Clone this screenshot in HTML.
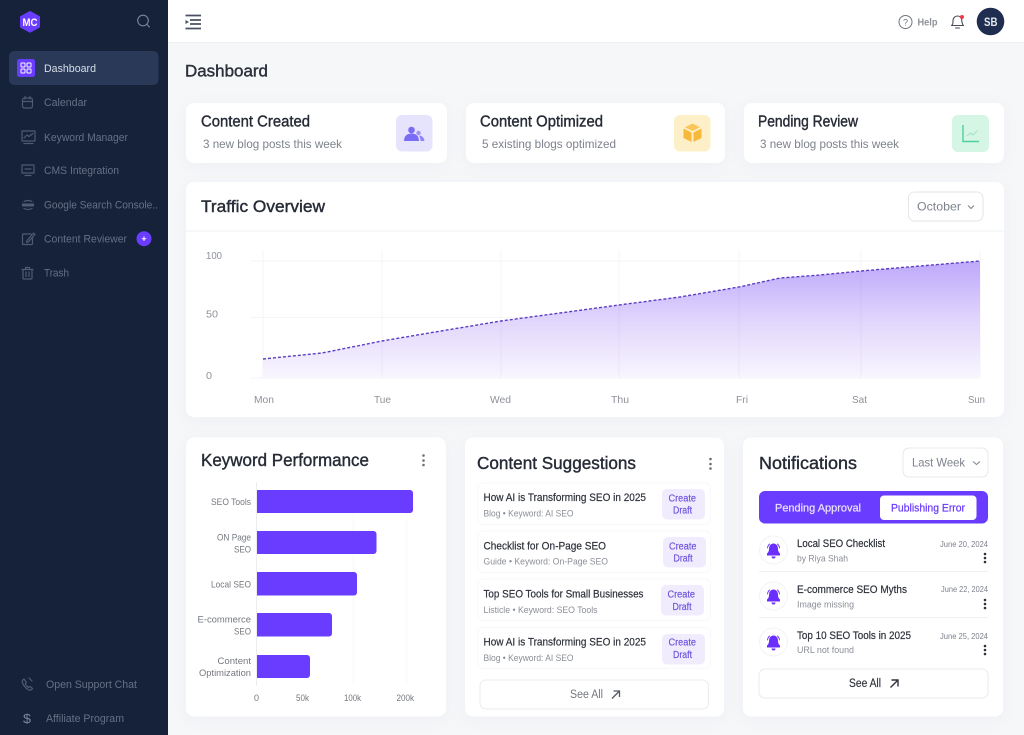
<!DOCTYPE html>
<html lang="en"><head><meta charset="utf-8"><title>Dashboard</title>
<style>
html,body{margin:0;padding:0;width:1024px;height:735px;overflow:hidden;background:#f6f7f9}
svg{display:block;filter:blur(.35px)}
text{font-family:"Liberation Sans",sans-serif;white-space:pre}
.n{font-size:11px;fill:#667085}
.h{font-size:15.500px;fill:#262b36;stroke:#262b36;stroke-width:.4}
.s{font-size:12px;fill:#7d828c}
.l{font-size:10.500px;fill:#8d9199}
.k{font-size:9.500px;fill:#74787f}
.r{font-size:11px;fill:#2d313a;stroke:#2d313a;stroke-width:.2}
.m{font-size:9.500px;fill:#8a8e96}
.c{font-size:10px;fill:#6c50dc;stroke:#6c50dc;stroke-width:.15}
.t{font-size:17.500px;fill:#262b36;stroke:#262b36;stroke-width:.4}
.card{fill:#fff;filter:drop-shadow(0 3px 8px rgba(30,35,60,.035))}
.ni{fill:none;stroke:#4f5b72;stroke-width:1.200;stroke-linecap:round;stroke-linejoin:round}
</style></head>
<body>
<svg width="1024" height="735" viewBox="0 0 1024 735" xmlns="http://www.w3.org/2000/svg">
<defs>
<linearGradient id="g" x1="0" y1="261" x2="0" y2="378" gradientUnits="userSpaceOnUse">
<stop offset="0" stop-color="#bda8fb"/><stop offset=".5" stop-color="#e0d5fc"/><stop offset="1" stop-color="#f9f6fe"/>
</linearGradient>
</defs>
<rect width="1024" height="735" fill="#f6f7f9"/>

<!-- sidebar -->
<rect width="168" height="735" fill="#16213a"/>
<path d="M30 11.500l9.500 5.200v10.300l-9.500 5.200-9.500-5.200V16.700z" fill="#6a3cff" stroke="#6a3cff" stroke-linejoin="round"/>
<text x="22.500" y="25.800" font-size="11" font-weight="700" fill="#fff" textLength="15" lengthAdjust="spacingAndGlyphs">MC</text>
<circle cx="143" cy="20.500" r="5.300" fill="none" stroke="#7b8699" stroke-width="1.100"/><path d="M147 24.500l2.500 2.500" stroke="#7b8699" stroke-width="1.100" stroke-linecap="round"/>

<rect x="9" y="51" width="149.500" height="34" rx="5" fill="#2a3958"/>
<rect x="17" y="59" width="18" height="18" rx="2.500" fill="#6a3cff"/>
<g fill="none" stroke="#fff" stroke-width="1"><rect x="21" y="63" width="4" height="4" rx=".6"/><rect x="27" y="63" width="4" height="4" rx=".6"/><rect x="21" y="69" width="4" height="4" rx=".6"/><rect x="27" y="69" width="4" height="4" rx=".6"/></g>
<text x="44" y="71.800" class="n" style="fill:#d8deea" textLength="52" lengthAdjust="spacingAndGlyphs">Dashboard</text>

<rect x="22.500" y="98" width="10" height="10" rx="2" class="ni"/><path d="M22.500 101.500h10M25 96.500v2.500M30 96.500v2.500" class="ni"/>
<text x="44" y="105.800" class="n" textLength="43" lengthAdjust="spacingAndGlyphs">Calendar</text>

<rect x="22" y="131" width="13" height="10" class="ni"/><path d="M24 138l3-3 2 1.500 4-3M24 143.500h9" class="ni"/>
<text x="44" y="141" class="n" textLength="84" lengthAdjust="spacingAndGlyphs">Keyword Manager</text>

<rect x="22" y="165" width="12" height="8" class="ni"/><path d="M25 169h6M25 175.500h6" class="ni"/>
<text x="44" y="174" class="n" textLength="75" lengthAdjust="spacingAndGlyphs">CMS Integration</text>

<path d="M22 205h12" stroke="#4f5b72" stroke-width="3"/><path d="M24 201.500q4-2 8 0M24 208.500q4 2 8 0" class="ni"/>
<text x="44" y="208.700" class="n" textLength="114" lengthAdjust="spacingAndGlyphs">Google Search Console..</text>

<path d="M31 234h-7.500a1 1 0 0 0-1 1v8.500a1 1 0 0 0 1 1h8a1 1 0 0 0 1-1V237M27 240.500l6.500-7.500 1.500 1.300-6.500 7.500-2 .5z" class="ni"/>
<text x="44" y="242.700" class="n" textLength="83" lengthAdjust="spacingAndGlyphs">Content Reviewer</text>
<circle cx="144" cy="238.700" r="7.500" fill="#6a3cff"/><path d="M141.800 238.700h4.400M144 236.500v4.400" stroke="#fff" stroke-width="1"/>

<path d="M23 269.500h9v8.500a1 1 0 0 1-1 1h-7a1 1 0 0 1-1-1zM22 269.500h11M25.500 269v-1.500h4v1.500M26 272v4.500M29 272v4.500" class="ni"/>
<text x="44" y="276.700" class="n" textLength="25" lengthAdjust="spacingAndGlyphs">Trash</text>

<path d="M24 679c-2 1-2 3-1 5 1.500 3 3.500 5 6 6 1.500.5 3-.5 3.500-1.500l-2.500-2-1.500 1c-1.500-.8-2.500-2-3.200-3.500l1-1.500z" class="ni"/><path d="M29 678l3 3" class="ni"/>
<text x="46" y="687.800" class="n" textLength="91" lengthAdjust="spacingAndGlyphs">Open Support Chat</text>
<text x="23" y="723" font-size="13" fill="#7d889b" textLength="8" lengthAdjust="spacingAndGlyphs">$</text>
<text x="46" y="721.800" class="n" textLength="78" lengthAdjust="spacingAndGlyphs">Affiliate Program</text>

<!-- header -->
<rect x="168" width="856" height="42.500" fill="#fff"/><path d="M168 42.500h856" stroke="#eeeff1"/>
<path d="M185.500 15.500h15.500M190 20h11M190 24h11M185.500 28.500h15.500" stroke="#4b5161" stroke-width="1.800"/><path d="M185.500 20l3.500 2-3.500 2z" fill="#4b5161"/>
<circle cx="905.500" cy="22" r="6.500" fill="none" stroke="#70757f" stroke-width="1"/>
<text x="903" y="25.500" font-size="9" fill="#70757f">?</text>
<text x="917.500" y="25.500" font-size="10" font-weight="700" fill="#8d9199" textLength="20" lengthAdjust="spacingAndGlyphs">Help</text>
<path d="M951.500 25.500c1.500-1 1.500-2.500 1.500-5 0-2.500 2-4.500 4.500-4.500 2 0 3.500 1 4 3 .5 2 .3 5 2 6.500zM955.500 28h4" fill="none" stroke="#474c58" stroke-width="1.100" stroke-linecap="round" stroke-linejoin="round"/>
<circle cx="962" cy="17" r="2" fill="#ef3a4a"/>
<circle cx="990.500" cy="21.500" r="13.800" fill="#1f2e50"/>
<text x="984" y="25.800" font-size="11.500" font-weight="700" fill="#e5e9f1" textLength="13.500" lengthAdjust="spacingAndGlyphs">SB</text>

<text x="185" y="76.700" font-size="16.500" fill="#2b303b" stroke="#2b303b" stroke-width=".4" textLength="83" lengthAdjust="spacingAndGlyphs">Dashboard</text>

<!-- stat cards -->
<rect x="186" y="103" width="261" height="60" rx="8" class="card"/>
<rect x="466" y="103" width="259" height="60" rx="8" class="card"/>
<rect x="744" y="103" width="260" height="60" rx="8" class="card"/>
<text x="201" y="126.300" class="h" textLength="109" lengthAdjust="spacingAndGlyphs">Content Created</text>
<text x="203" y="148" class="s" textLength="139" lengthAdjust="spacingAndGlyphs">3 new blog posts this week</text>
<text x="480" y="126.300" class="h" textLength="123" lengthAdjust="spacingAndGlyphs">Content Optimized</text>
<text x="482" y="148" class="s" textLength="134" lengthAdjust="spacingAndGlyphs">5 existing blogs optimized</text>
<text x="758" y="126.300" class="h" textLength="100" lengthAdjust="spacingAndGlyphs">Pending Review</text>
<text x="760" y="148" class="s" textLength="139" lengthAdjust="spacingAndGlyphs">3 new blog posts this week</text>

<rect x="396" y="115" width="36.500" height="36.500" rx="6" fill="#e6e3fd"/>
<g fill="#7a6cf5"><circle cx="411.500" cy="130" r="3.300"/><path d="M404 141c0-5 3-7.500 7.500-7.500s7.500 2.500 7.500 7.500z"/><circle cx="418.500" cy="133" r="2.200" fill="#9c92f7"/><path d="M419 135.500c3 0 5 2 5.500 5.500h-4c0-2-.5-4-1.500-5.500z" fill="#8f84f6"/></g>

<rect x="674" y="115" width="36.500" height="36.500" rx="6" fill="#fdf0c8"/>
<path d="M692.500 123.500l7.500 3.700-7.500 3.800-7.500-3.800z" fill="#fbc55a"/><path d="M683.500 128.500l8 4v9.500l-8-4zM701.500 128.500l-8 4v9.500l8-4z" fill="#f8b93a"/>

<rect x="952" y="115" width="37" height="37" rx="6" fill="#d5f5e5"/>
<path d="M963 125v16.500h16" fill="none" stroke="#4fcf9c" stroke-width="1.400"/><path d="M967 136l3.500-3 2.500 2 4.500-4.500" fill="none" stroke="#a3e3c8" stroke-width="1.100"/>

<!-- traffic -->
<rect x="186" y="182" width="818" height="235" rx="8" class="card"/>
<text x="201" y="212" font-size="17" fill="#262b36" stroke="#262b36" stroke-width=".4" textLength="124" lengthAdjust="spacingAndGlyphs">Traffic Overview</text>
<path d="M186 231h818" stroke="#eff0f3"/>
<rect x="908.500" y="192" width="74.500" height="29" rx="6" fill="#fff" stroke="#e5e6ea"/>
<text x="917" y="210.500" font-size="12" fill="#7d828c" textLength="44" lengthAdjust="spacingAndGlyphs">October</text>
<path d="M968 205.500l3 3 3-3" fill="none" stroke="#7d828c" stroke-width="1"/>

<g stroke="#f5f5f8" stroke-width="1"><path d="M250 261h730M250 317.500h730M250 378h730M263 250v128M382 250v128M501 250v128M619 250v128M739 250v128M861 250v128M980 250v128"/></g>
<polygon points="263,359 322,353 352,347 382,341 441,331 501,321 560,313 619,305 680,297 739,287 780,278 820,275 861,271 920,266 980,261 980,378 263,378" fill="url(#g)"/>
<g stroke="#7a60d8" stroke-width="1" opacity=".07"><path d="M382 341v37M501 321v57M619 305v73M739 288v90M861 272v106"/></g>
<polyline points="263,359 322,353 352,347 382,341 441,331 501,321 560,313 619,305 680,297 739,287 780,278 820,275 861,271 920,266 980,261" fill="none" stroke="#5b3dc4" stroke-width="1.400" stroke-dasharray="3 2"/>
<text x="206" y="259" class="l" textLength="16" lengthAdjust="spacingAndGlyphs">100</text>
<text x="206" y="317.500" class="l" textLength="12" lengthAdjust="spacingAndGlyphs">50</text>
<text x="206" y="379" class="l" textLength="6" lengthAdjust="spacingAndGlyphs">0</text>
<text x="254" y="403" class="l" textLength="20" lengthAdjust="spacingAndGlyphs">Mon</text>
<text x="374" y="403" class="l" textLength="17" lengthAdjust="spacingAndGlyphs">Tue</text>
<text x="490" y="403" class="l" textLength="21" lengthAdjust="spacingAndGlyphs">Wed</text>
<text x="611" y="403" class="l" textLength="18" lengthAdjust="spacingAndGlyphs">Thu</text>
<text x="736" y="403" class="l" textLength="12" lengthAdjust="spacingAndGlyphs">Fri</text>
<text x="852" y="403" class="l" textLength="15" lengthAdjust="spacingAndGlyphs">Sat</text>
<text x="968" y="403" class="l" textLength="17" lengthAdjust="spacingAndGlyphs">Sun</text>

<!-- keyword performance -->
<rect x="186" y="437.500" width="260" height="279" rx="8" class="card"/>
<text x="201" y="466" class="t" textLength="168" lengthAdjust="spacingAndGlyphs">Keyword Performance</text>
<g fill="#6b7078"><circle cx="423.500" cy="455.500" r="1.300"/><circle cx="423.500" cy="460.500" r="1.300"/><circle cx="423.500" cy="465" r="1.300"/></g>
<path d="M256.500 482v204" stroke="#ececf0"/><path d="M353 490v195M407 490v195" stroke="#f9f9fb"/>
<g fill="#6a3cff">
<path d="M257 490h153a3 3 0 0 1 3 3v17a3 3 0 0 1-3 3H257z"/>
<path d="M257 531h116.500a3 3 0 0 1 3 3v17a3 3 0 0 1-3 3H257z"/>
<path d="M257 572h97a3 3 0 0 1 3 3v17.500a3 3 0 0 1-3 3H257z"/>
<path d="M257 613h72a3 3 0 0 1 3 3v17.500a3 3 0 0 1-3 3H257z"/>
<path d="M257 655h50a3 3 0 0 1 3 3v17a3 3 0 0 1-3 3H257z"/>
</g>
<text x="211" y="505" class="k" textLength="40" lengthAdjust="spacingAndGlyphs">SEO Tools</text>
<text x="217" y="540.300" class="k" textLength="34" lengthAdjust="spacingAndGlyphs">ON Page</text>
<text x="234" y="552.500" class="k" textLength="17" lengthAdjust="spacingAndGlyphs">SEO</text>
<text x="211" y="587.300" class="k" textLength="40" lengthAdjust="spacingAndGlyphs">Local SEO</text>
<text x="197.500" y="622.500" class="k" textLength="53.500" lengthAdjust="spacingAndGlyphs">E-commerce</text>
<text x="234" y="634.500" class="k" textLength="17" lengthAdjust="spacingAndGlyphs">SEO</text>
<text x="217.500" y="664" class="k" textLength="33.500" lengthAdjust="spacingAndGlyphs">Content</text>
<text x="199" y="676" class="k" textLength="52" lengthAdjust="spacingAndGlyphs">Optimization</text>
<text x="254" y="701" class="k" textLength="5" lengthAdjust="spacingAndGlyphs">0</text>
<text x="296" y="701" class="k" textLength="13" lengthAdjust="spacingAndGlyphs">50k</text>
<text x="344" y="701" class="k" textLength="17" lengthAdjust="spacingAndGlyphs">100k</text>
<text x="396.500" y="701" class="k" textLength="17.500" lengthAdjust="spacingAndGlyphs">200k</text>

<!-- content suggestions -->
<rect x="465" y="437.500" width="259" height="279" rx="8" class="card"/>
<text x="477" y="469" class="t" textLength="159" lengthAdjust="spacingAndGlyphs">Content Suggestions</text>
<g fill="#6b7078"><circle cx="710.500" cy="459" r="1.300"/><circle cx="710.500" cy="464" r="1.300"/><circle cx="710.500" cy="468.500" r="1.300"/></g>
<g fill="#fff" stroke="#f8f8fa"><rect x="477.500" y="483" width="233" height="41.500" rx="5"/><rect x="477.500" y="531" width="233" height="41.500" rx="5"/><rect x="477.500" y="579" width="233" height="41.500" rx="5"/><rect x="477.500" y="627.500" width="233" height="41" rx="5"/></g>
<text x="483.500" y="501" class="r" textLength="162.500" lengthAdjust="spacingAndGlyphs">How AI is Transforming SEO in 2025</text>
<text x="483.500" y="516.500" class="m" textLength="90" lengthAdjust="spacingAndGlyphs">Blog • Keyword: AI SEO</text>
<text x="483.500" y="549.500" class="r" textLength="122.500" lengthAdjust="spacingAndGlyphs">Checklist for On-Page SEO</text>
<text x="483.500" y="564.500" class="m" textLength="124.500" lengthAdjust="spacingAndGlyphs">Guide • Keyword: On-Page SEO</text>
<text x="483.500" y="597.500" class="r" textLength="160" lengthAdjust="spacingAndGlyphs">Top SEO Tools for Small Businesses</text>
<text x="483.500" y="612.800" class="m" textLength="114" lengthAdjust="spacingAndGlyphs">Listicle • Keyword: SEO Tools</text>
<text x="483.500" y="645.500" class="r" textLength="162.500" lengthAdjust="spacingAndGlyphs">How AI is Transforming SEO in 2025</text>
<text x="483.500" y="661" class="m" textLength="90" lengthAdjust="spacingAndGlyphs">Blog • Keyword: AI SEO</text>
<g fill="#f0ecfd"><rect x="662" y="489" width="43" height="30.500" rx="5"/><rect x="663" y="537" width="43" height="30.500" rx="5"/><rect x="661" y="585" width="43" height="30.500" rx="5"/><rect x="662" y="634" width="43" height="30.500" rx="5"/></g>
<text x="668.500" y="501.500" class="c" textLength="27.500" lengthAdjust="spacingAndGlyphs">Create</text>
<text x="673" y="513.500" class="c" textLength="19" lengthAdjust="spacingAndGlyphs">Draft</text>
<text x="669" y="549.500" class="c" textLength="27.500" lengthAdjust="spacingAndGlyphs">Create</text>
<text x="673.500" y="561.500" class="c" textLength="19" lengthAdjust="spacingAndGlyphs">Draft</text>
<text x="667.500" y="597.500" class="c" textLength="27.500" lengthAdjust="spacingAndGlyphs">Create</text>
<text x="672.500" y="609.800" class="c" textLength="19" lengthAdjust="spacingAndGlyphs">Draft</text>
<text x="668.500" y="645.500" class="c" textLength="27.500" lengthAdjust="spacingAndGlyphs">Create</text>
<text x="673" y="658" class="c" textLength="19" lengthAdjust="spacingAndGlyphs">Draft</text>
<rect x="480" y="680" width="228.500" height="29" rx="6" fill="#fff" stroke="#ebebef"/>
<text x="570" y="698" font-size="11.500" fill="#74787f" textLength="33" lengthAdjust="spacingAndGlyphs">See All</text>
<path d="M612 698.500l7-7M613.500 691h6v6" fill="none" stroke="#555a64" stroke-width="1.300"/>

<!-- notifications -->
<rect x="743" y="437.500" width="260" height="279" rx="8" class="card"/>
<text x="759" y="469" class="t" textLength="98" lengthAdjust="spacingAndGlyphs">Notifications</text>
<rect x="903" y="448" width="85" height="29" rx="6" fill="#fff" stroke="#e7e8eb"/>
<text x="912" y="466.500" font-size="12" fill="#7d828c" textLength="53" lengthAdjust="spacingAndGlyphs">Last Week</text>
<path d="M973 461.500l3.500 3 3.500-3" fill="none" stroke="#7d828c" stroke-width="1"/>
<rect x="759" y="491" width="229" height="32.500" rx="6" fill="#6a3cff"/>
<rect x="880" y="495.500" width="96.500" height="24.500" rx="4" fill="#fff"/>
<text x="775" y="511.500" font-size="11" fill="#e8e0ff" stroke="#e8e0ff" stroke-width=".25" textLength="86" lengthAdjust="spacingAndGlyphs">Pending Approval</text>
<text x="891" y="511.500" font-size="11" fill="#6a3cff" stroke="#6a3cff" stroke-width=".25" textLength="74" lengthAdjust="spacingAndGlyphs">Publishing Error</text>

<g fill="#fff" stroke="#f3f3f5"><circle cx="773.500" cy="550" r="14"/><circle cx="773.500" cy="596" r="14"/><circle cx="773.500" cy="642" r="14"/></g>
<g fill="#6a2fff">
<path d="M773.500 543.500c3 0 4.500 2.500 4.500 5.500 0 2 .7 3.500 2 4.500v2h-13v-2c1.300-1 2-2.500 2-4.500 0-3 1.500-5.500 4.500-5.500zM771.500 556.500h4a2 2 0 0 1-4 0z"/>
<path d="M773.500 589.500c3 0 4.500 2.500 4.500 5.500 0 2 .7 3.500 2 4.500v2h-13v-2c1.300-1 2-2.500 2-4.500 0-3 1.500-5.500 4.500-5.500zM771.500 602.500h4a2 2 0 0 1-4 0z"/>
<path d="M773.500 635.500c3 0 4.500 2.500 4.500 5.500 0 2 .7 3.500 2 4.500v2h-13v-2c1.300-1 2-2.500 2-4.500 0-3 1.500-5.500 4.500-5.500zM771.500 648.500h4a2 2 0 0 1-4 0z"/>
</g>
<g fill="none" stroke="#6a2fff" stroke-width=".9" stroke-linecap="round"><path d="M767.500 548q.3-2.500 2-4M779.500 548q-.3-2.500-2-4M767.500 594q.3-2.500 2-4M779.500 594q-.3-2.500-2-4M767.500 640q.3-2.500 2-4M779.500 640q-.3-2.500-2-4"/></g>
<text x="797" y="546.800" class="r" textLength="88" lengthAdjust="spacingAndGlyphs">Local SEO Checklist</text>
<text x="797" y="561.500" class="m" textLength="51" lengthAdjust="spacingAndGlyphs">by Riya Shah</text>
<text x="940" y="547" font-size="8.500" fill="#7d828c" textLength="48" lengthAdjust="spacingAndGlyphs">June 20, 2024</text>
<text x="797" y="592.800" class="r" textLength="110" lengthAdjust="spacingAndGlyphs">E-commerce SEO Myths</text>
<text x="797" y="607.500" class="m" textLength="57" lengthAdjust="spacingAndGlyphs">Image missing</text>
<text x="941" y="592" font-size="8.500" fill="#7d828c" textLength="47" lengthAdjust="spacingAndGlyphs">June 22, 2024</text>
<text x="797" y="638.800" class="r" textLength="114" lengthAdjust="spacingAndGlyphs">Top 10 SEO Tools in 2025</text>
<text x="797" y="653" class="m" textLength="57" lengthAdjust="spacingAndGlyphs">URL not found</text>
<text x="940" y="639" font-size="8.500" fill="#7d828c" textLength="48" lengthAdjust="spacingAndGlyphs">June 25, 2024</text>
<g fill="#2b2f38"><circle cx="985" cy="554" r="1.300"/><circle cx="985" cy="558" r="1.300"/><circle cx="985" cy="562" r="1.300"/><circle cx="985" cy="600" r="1.300"/><circle cx="985" cy="604" r="1.300"/><circle cx="985" cy="608" r="1.300"/><circle cx="985" cy="646" r="1.300"/><circle cx="985" cy="650" r="1.300"/><circle cx="985" cy="654" r="1.300"/></g>
<path d="M759 571.500h229M759 617.500h229" stroke="#f1f1f4"/>
<rect x="759" y="669" width="229" height="29" rx="6" fill="#fff" stroke="#ebebef"/>
<text x="849" y="687" font-size="11.500" fill="#34383f" stroke="#34383f" stroke-width=".2" textLength="32" lengthAdjust="spacingAndGlyphs">See All</text>
<path d="M890.500 687.500l7-7M891.500 680h6.500v6.500" fill="none" stroke="#2f333b" stroke-width="1.400"/>
</svg>
</body></html>
